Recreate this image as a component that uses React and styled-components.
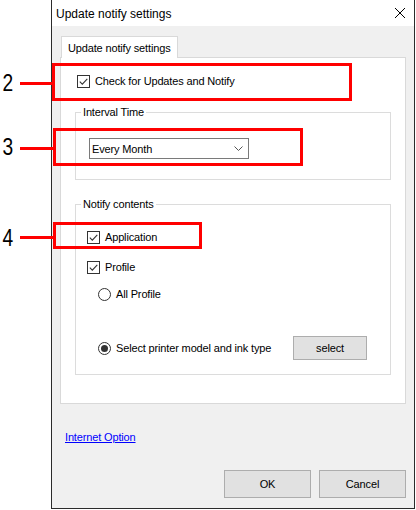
import React from "react";
import styled, { createGlobalStyle } from "styled-components";

const GlobalStyle = createGlobalStyle`
  html, body {
    margin: 0;
    padding: 0;
    background: #fff;
  }
  body {
    font-family: "Liberation Sans", Arial, sans-serif;
    font-size: 11px;
    color: #000;
  }
`;

const Page = styled.div`
  position: relative;
  width: 416px;
  height: 510px;
  padding-left: 51px;
  box-sizing: border-box;
  overflow: hidden;
  background: #fff;
`;

const Dialog = styled.div`
  width: 364px;
  height: 509px;
  box-sizing: border-box;
  border: 1px solid #2b2b2b;
  border-top: none;
  background: #f0f0f0;
  display: flex;
  flex-direction: column;
`;

const TitleBar = styled.div`
  flex: 0 0 26px;
  background: #fff;
  display: flex;
  align-items: center;
  justify-content: space-between;
  padding-left: 4px;
`;

const Title = styled.span`
  font-size: 12px;
  padding-top: 1px;
`;

const CloseButton = styled.button`
  width: 28px;
  height: 26px;
  padding: 0;
  border: 0;
  background: transparent;
  display: flex;
  align-items: center;
  justify-content: center;
`;

const Body = styled.div`
  flex: 1;
  padding: 10px 8px;
  display: flex;
  flex-direction: column;
  letter-spacing: -0.15px;
`;

const TabStrip = styled.div`
  display: flex;
  padding-left: 1px;
`;

const Tab = styled.div`
  position: relative;
  z-index: 1;
  width: 117px;
  height: 22px;
  margin-bottom: -1px;
  box-sizing: border-box;
  border: 1px solid #d9d9d9;
  border-bottom: none;
  background: #fff;
  padding: 1px 0 0 6px;
  display: flex;
  align-items: center;
`;

const Panel = styled.div`
  height: 347px;
  box-sizing: border-box;
  border: 1px solid #d9d9d9;
  background: #fff;
  padding: 17px 0 0 14px;
  display: flex;
  flex-direction: column;
  align-items: flex-start;
`;

const OptionRow = styled.label`
  display: flex;
  align-items: center;
  gap: 5px;
  height: ${(p) => p.$h || 13}px;
  line-height: 13px;
  margin: ${(p) => p.$mt || 0}px 0 0 ${(p) => p.$ml || 0}px;
  white-space: nowrap;
`;

const CheckBox = styled.span`
  flex: none;
  width: 13px;
  height: 13px;
  box-sizing: border-box;
  border: 1px solid #333;
  background: #fff;
  display: flex;
  align-items: center;
  justify-content: center;
`;

const RadioCircle = styled.span`
  flex: none;
  width: 13px;
  height: 13px;
  box-sizing: border-box;
  border: 1px solid #333;
  border-radius: 50%;
  background: #fff;
  display: flex;
  align-items: center;
  justify-content: center;

  &::after {
    content: "";
    display: ${(p) => (p.$on ? "block" : "none")};
    width: 7px;
    height: 7px;
    border-radius: 50%;
    background: #333;
  }
`;

const RadioText = styled.span`
  flex: 0 0 ${(p) => (p.$w ? `${p.$w}px` : "auto")};
`;

const Group = styled.fieldset`
  width: 316px;
  box-sizing: border-box;
  min-width: 0;
  margin: 17px 0 0;
  padding: 0;
  border: 1px solid #dcdcdc;
`;

const Legend = styled.legend`
  margin-left: 5px;
  padding: 0 2px;
  line-height: 14px;
`;

const GroupBody = styled.div`
  padding: ${(p) => p.$pad};
  display: flex;
  flex-direction: column;
  align-items: flex-start;
`;

const Combo = styled.div`
  width: 160px;
  height: 21px;
  box-sizing: border-box;
  border: 1px solid #7a7a7a;
  background: #fff;
  padding: 0 5px 0 2px;
  display: flex;
  align-items: center;
  justify-content: space-between;
`;

const PushButton = styled.button`
  width: ${(p) => p.$w}px;
  height: ${(p) => p.$h}px;
  padding: 0;
  border: 1px solid #adadad;
  background: #e1e1e1;
  color: #000;
  font: inherit;
  letter-spacing: -0.15px;
`;

const LinkText = styled.a`
  align-self: flex-start;
  margin: 26px 0 0 5px;
  line-height: 14px;
  color: #0000ff;
  text-decoration: underline;
`;

const Footer = styled.div`
  margin-top: 26px;
  display: flex;
  justify-content: flex-end;
  gap: 8px;
`;

/* callouts drawn over the screenshot */
const Callout = styled.div`
  position: absolute;
  left: 0;
  top: ${(p) => p.$top}px;
  display: flex;
  align-items: center;
  pointer-events: none;
`;

const Num = styled.span`
  width: 20px;
  box-sizing: border-box;
  padding-left: 3px;
  margin-top: ${(p) => p.$dy || 0}px;
  font-family: "Liberation Sans Narrow", "Liberation Sans", Arial, sans-serif;
  font-size: 24px;
  line-height: 24px;
  transform: scaleX(0.8);
  transform-origin: left center;
`;

const Leader = styled.span`
  width: ${(p) => p.$w}px;
  height: 3px;
  margin-top: ${(p) => p.$dy || 0}px;
  background: #ff0000;
`;

const RedBox = styled.span`
  width: ${(p) => p.$w}px;
  height: ${(p) => p.$h}px;
  box-sizing: border-box;
  border: 3px solid #ff0000;
`;

const Check = () => (
  <CheckBox>
    <svg width="11" height="11" viewBox="0 0 11 11">
      <path d="M1.8 5.6 L4.3 8.1 L9.3 2.8" fill="none" stroke="#333" strokeWidth="1.1" />
    </svg>
  </CheckBox>
);

const App = () => (
  <>
    <GlobalStyle />
    <Page>
      <Dialog>
        <TitleBar>
          <Title>Update notify settings</Title>
          <CloseButton>
            <svg width="10" height="10" viewBox="0 0 10 10">
              <path d="M0 0 L10 10 M10 0 L0 10" stroke="#000" strokeWidth="1" />
            </svg>
          </CloseButton>
        </TitleBar>
        <Body>
          <TabStrip>
            <Tab>Update notify settings</Tab>
          </TabStrip>
          <Panel>
            <OptionRow $ml={2}>
              <Check />
              Check for Updates and Notify
            </OptionRow>

            <Group>
              <Legend>Interval Time</Legend>
              <GroupBody $pad="19px 0 20px 13px">
                <Combo>
                  <span>Every Month</span>
                  <svg width="9" height="5" viewBox="0 0 9 5">
                    <path d="M0.5 0.5 L4.5 4.5 L8.5 0.5" fill="none" stroke="#555" strokeWidth="1" />
                  </svg>
                </Combo>
              </GroupBody>
            </Group>

            <Group>
              <Legend>Notify contents</Legend>
              <GroupBody $pad="20px 0 14px 11px">
                <OptionRow>
                  <Check />
                  Application
                </OptionRow>
                <OptionRow $mt={17}>
                  <Check />
                  Profile
                </OptionRow>
                <OptionRow $mt={14} $ml={11}>
                  <RadioCircle />
                  <RadioText>All Profile</RadioText>
                </OptionRow>
                <OptionRow $mt={35} $ml={11} $h={24}>
                  <RadioCircle $on />
                  <RadioText $w={172}>Select printer model and ink type</RadioText>
                  <PushButton $w={74} $h={24}>select</PushButton>
                </OptionRow>
              </GroupBody>
            </Group>
          </Panel>

          <LinkText>Internet Option</LinkText>

          <Footer>
            <PushButton $w={87} $h={28}>OK</PushButton>
            <PushButton $w={87} $h={28}>Cancel</PushButton>
          </Footer>
        </Body>
      </Dialog>

      <Callout $top={63}>
        <Num $dy={2}>2</Num>
        <Leader $w={32} $dy={3} />
        <RedBox $w={300} $h={38} />
      </Callout>
      <Callout $top={128}>
        <Num>3</Num>
        <Leader $w={33} $dy={2} />
        <RedBox $w={250} $h={38} />
      </Callout>
      <Callout $top={221}>
        <Num $dy={5}>4</Num>
        <Leader $w={33} $dy={3} />
        <RedBox $w={149} $h={27} />
      </Callout>
    </Page>
  </>
);

export default App;
